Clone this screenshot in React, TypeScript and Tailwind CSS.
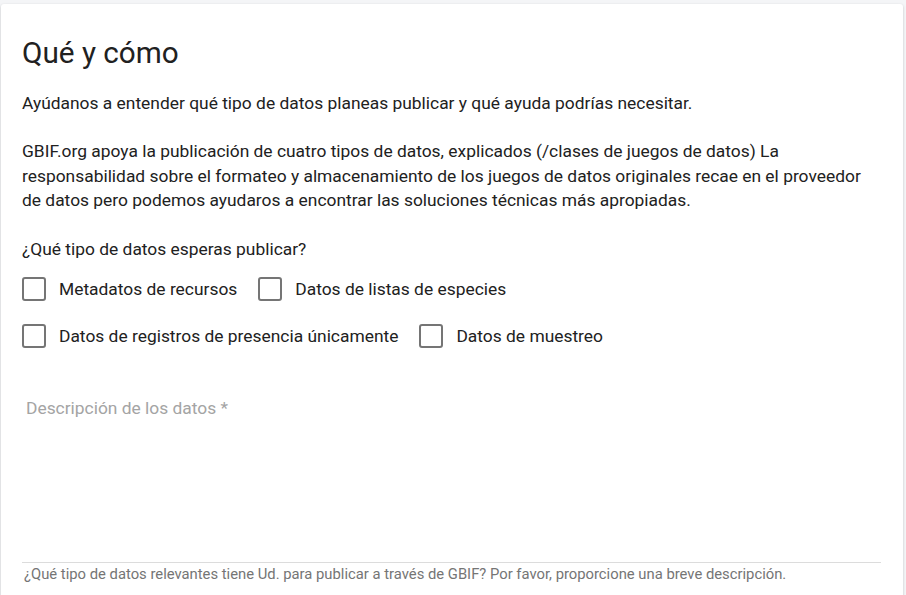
import React from "react";

const options = [
  ["Metadatos de recursos", "Datos de listas de especies"],
  ["Datos de registros de presencia únicamente", "Datos de muestreo"],
];

function Checkbox({ label }: { label: string }) {
  return (
    <label className="flex items-center mr-[21px] cursor-pointer">
      <span className="w-[24px] h-[24px] border-2 border-[#757575] rounded-[3px] bg-white" />
      <span className="ml-[13px] text-[17.4px] leading-[24px] text-[#212121]">{label}</span>
    </label>
  );
}

export default function App() {
  return (
    <div
      className="w-[906px] h-[595px] overflow-hidden bg-[#f4f5f7] pt-[4px] pl-[1px]"
      style={{ fontFamily: "Roboto, 'Noto Sans', sans-serif" }}
    >
      <div className="w-[902px] h-[620px] bg-white rounded-[3px] shadow-[0_1px_3px_rgba(0,0,0,0.2)] pt-[31px] pl-[21px] pr-[22px]">
        <h1 className="text-[29.7px] leading-[36px] font-normal text-[#212121]">Qué y cómo</h1>
        <p className="mt-[20px] text-[17.4px] leading-[24px] text-[#212121]">
          Ayúdanos a entender qué tipo de datos planeas publicar y qué ayuda podrías necesitar.
        </p>
        <p className="mt-[24px] text-[17.4px] leading-[24.5px] text-[#212121]">
          GBIF.org apoya la publicación de cuatro tipos de datos, explicados (/clases de juegos de datos) La
          responsabilidad sobre el formateo y almacenamiento de los juegos de datos originales recae en el proveedor
          de datos pero podemos ayudaros a encontrar las soluciones técnicas más apropiadas.
        </p>
        <p className="mt-[24px] text-[17.4px] leading-[24px] text-[#212121]">¿Qué tipo de datos esperas publicar?</p>
        <div className="mt-[16px] flex flex-col gap-[23px]">
          {options.map((row, i) => (
            <div key={i} className="flex">
              {row.map((o) => (
                <Checkbox key={o} label={o} />
              ))}
            </div>
          ))}
        </div>
        <div className="mt-[48px] pl-[4px] text-[17.4px] leading-[24px] text-[#a4a4a4]">Descripción de los datos *</div>
        <div className="h-[142px]" />
        <div className="border-t border-[#dcdcdc]" />
        <div className="mt-[2px] pl-[2px] text-[14.8px] leading-[18px] text-[#757575]">
          ¿Qué tipo de datos relevantes tiene Ud. para publicar a través de GBIF? Por favor, proporcione una breve descripción.
        </div>
      </div>
    </div>
  );
}
